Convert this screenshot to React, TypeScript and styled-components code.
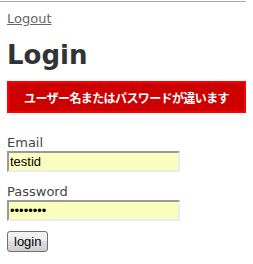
import React from "react";
import styled, { createGlobalStyle } from "styled-components";

const Global = createGlobalStyle`
  html, body { margin: 0; padding: 0; background: #fff; }
  body { font-family: "DejaVu Sans", Verdana, sans-serif; }
`;

const Page = styled.div`
  width: 239px;
  margin-top: 1px;
  border-top: 1px solid #ababab;
  padding: 9px 0 12px 7px;
  display: flex;
  flex-direction: column;
  align-items: flex-start;
`;

const LogoutLink = styled.a`
  font-family: "DejaVu Sans", Verdana, sans-serif;
  font-size: 13px;
  line-height: 15px;
  color: #666;
  text-decoration: underline;
  cursor: pointer;
`;

const Title = styled.h1`
  margin: 14px 0 0;
  font-family: "DejaVu Sans", Verdana, sans-serif;
  font-size: 26px;
  line-height: 30px;
  font-weight: bold;
  color: #333;
`;

const ErrorBox = styled.div`
  box-sizing: border-box;
  width: 239px;
  height: 32px;
  margin-top: 11px;
  background: #cc0000;
  border: 2px solid #ff0000;
  display: flex;
  align-items: center;
  justify-content: center;
  color: #fff;
  font-family: "Noto Sans CJK JP", "DejaVu Sans", sans-serif;
  font-size: 12px;
  font-weight: bold;
  letter-spacing: -0.6px;
  white-space: nowrap;
`;

const Field = styled.div<{ $top: number }>`
  display: flex;
  flex-direction: column;
  align-items: flex-start;
  margin-top: ${(p) => p.$top}px;
`;

const Label = styled.label`
  font-family: "DejaVu Sans", Verdana, sans-serif;
  font-size: 13px;
  line-height: 15px;
  color: #444;
`;

const Input = styled.input`
  box-sizing: border-box;
  width: 173px;
  height: 21px;
  margin: 1px 0 0;
  padding: 0 1px;
  border-style: solid;
  border-width: 2px;
  border-color: #9a9a9a #ececec #ececec #9a9a9a;
  background: #faffbd;
  font-family: "Liberation Sans", Arial, sans-serif;
  font-size: 13px;
  color: #000;
  outline: none;
`;

const Button = styled.button`
  box-sizing: border-box;
  margin-top: 10px;
  height: 21px;
  padding: 0 6px;
  border: 1px solid #707070;
  border-radius: 3px;
  background: linear-gradient(#f2f2f2, #ebebeb 50%, #dddddd 50%, #cfcfcf);
  font-family: "Liberation Sans", Arial, sans-serif;
  font-size: 13px;
  line-height: 15px;
  color: #000;
`;

export default function App() {
  return (
    <>
      <Global />
      <Page>
        <LogoutLink>Logout</LogoutLink>
        <Title>Login</Title>
        <ErrorBox>ユーザー名またはパスワードが違います</ErrorBox>
        <Field $top={22}>
          <Label>Email</Label>
          <Input type="text" defaultValue="testid" />
        </Field>
        <Field $top={12}>
          <Label>Password</Label>
          <Input type="password" defaultValue="password" />
        </Field>
        <Button>login</Button>
      </Page>
    </>
  );
}
